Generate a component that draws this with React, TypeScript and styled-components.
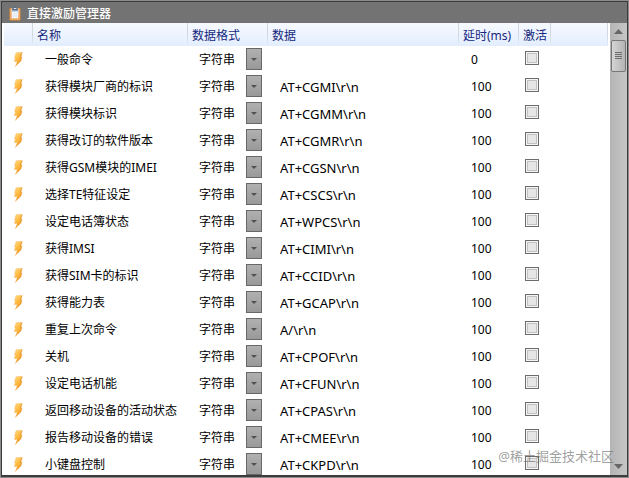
import React from "react";
import styled, { createGlobalStyle } from "styled-components";

const GlobalStyle = createGlobalStyle`
  *, *::before, *::after { box-sizing: border-box; }
  body { margin: 0; background: #8c8c8c; }
  body, button, select, input {
    font-family: "Noto Sans", "Noto Sans CJK SC", sans-serif;
    font-size: 12px;
  }
`;

const Frame = styled.div`
  height: 100vh;
  padding: 1px;
  background: #8c8c8c;
`;

const Window = styled.main`
  display: flex;
  flex-direction: column;
  height: 100%;
  border: 1px solid #3c3c3c;
  border-width: 1px 1px 2px;
  background: #fff;
  overflow: hidden;
`;

const TitleBar = styled.header`
  display: flex;
  flex: none;
  align-items: center;
  gap: 6px;
  height: 21px;
  padding: 2px 7px 0;
  background: #737373;
  color: #fff;
`;

const Title = styled.h1`
  margin: 0;
  font-size: 12px;
  line-height: 20px;
  font-weight: 500;
`;

const Body = styled.div`
  display: flex;
  flex: 1;
  min-height: 0;
`;

const ListPane = styled.div`
  flex: 1;
  min-width: 0;
  padding: 0 2px;
  overflow: hidden;
`;

const Table = styled.table`
  width: 100%;
  table-layout: fixed;
  border-collapse: separate;
  border-spacing: 0;
  color: #000;
`;

const Col = styled.col<{ $width?: number }>`
  width: ${(p) => (p.$width ? `${p.$width}px` : "auto")};
`;

const HeadRow = styled.tr`
  background: linear-gradient(#f6f9ff, #edf4ff 50%, #e2edfd);
`;

const HeadCell = styled.th`
  height: 23px;
  padding: 2px 0 0 4px;
  border-right: 1px solid;
  border-image: linear-gradient(#cfd4dc, #d4dae4 60%, #e8f0fc) 1;
  color: #15287d;
  font-weight: 400;
  line-height: 20px;
  text-align: left;
  white-space: nowrap;
`;

const Cell = styled.td<{ $indent: number }>`
  height: 27px;
  padding: 0 0 0 ${(p) => p.$indent}px;
  line-height: 20px;
  white-space: nowrap;
`;

const DataCell = styled(Cell)`
  font-size: 13px;
`;

const FormatField = styled.span`
  display: grid;
  grid-template-columns: 47px 16px;
  align-items: center;
  margin-bottom: 1px;
`;

const FormatSelect = styled.select`
  grid-area: 1 / 1 / 2 / 3;
  width: 100%;
  height: 22px;
  padding: 1px 0 0;
  border: 0;
  background: transparent;
  color: #000;
  appearance: none;
`;

const DropMark = styled.span`
  display: flex;
  grid-area: 1 / 2;
  align-items: center;
  justify-content: center;
  height: 22px;
  border: 1px solid #686868;
  background: linear-gradient(#b0b0b0, #999);
  pointer-events: none;
`;

const Check = styled.input`
  display: block;
  width: 14px;
  height: 14px;
  margin: 0 0 4px;
  border: 1px solid #6c6c6c;
  background: #e6e6e6;
  box-shadow: inset 0 0 0 1px #f4f4f4, inset 0 0 0 2px #c2c2c2;
  appearance: none;

  &:checked { background: #777; }
`;

const ScrollBar = styled.div`
  display: flex;
  flex: none;
  flex-direction: column;
  width: 17px;
  padding: 0 1px;
  background: linear-gradient(90deg, #b4b4b4, #c6c6c6);
`;

const ScrollButton = styled.button`
  display: flex;
  align-items: center;
  justify-content: center;
  height: 17px;
  padding: 0;
  border: 0;
  background: transparent;
`;

const Thumb = styled.div`
  display: flex;
  align-items: center;
  justify-content: center;
  height: 32px;
  border: 1px solid #777;
  border-radius: 2px;
  background: linear-gradient(90deg, #d4d4d4, #b4b4b4);
`;

const Track = styled.div`
  flex: 1;
`;

const Watermark = styled.div`
  position: absolute;
  right: 15px;
  bottom: 12px;
  color: rgba(105, 105, 105, 0.65);
  font-size: 13px;
  line-height: 20px;
  pointer-events: none;
`;

const Icon = styled.svg`
  display: block;
  flex: none;
`;

function ClipboardIcon() {
  return (
    <Icon width="12" height="14" viewBox="0 0 12 14" aria-hidden="true">
      <rect x="0.5" y="1" width="11" height="12.5" rx="1" fill="#e08a35" />
      <path d="M1.5 2v10.500h9V2" fill="none" stroke="#f3ad5f" strokeWidth="0.8" />
      <path d="M2.500 1.500h7v10h-7z" fill="#f3f7fc" />
      <path d="M2.500 3.500h7v1.500h-7z" fill="#c3d3e6" />
      <path d="M3.500 7h5M3.500 9h5" stroke="#d5dfeb" strokeWidth="0.8" />
      <path d="M3 1.500h1.500V0h3v1.500H9v2H3z" fill="#4f6d90" />
      <path d="M5 1h2v1H5z" fill="#dbe6f2" />
    </Icon>
  );
}

function BoltIcon() {
  return (
    <Icon width="10" height="15" viewBox="0 0 10 15" aria-hidden="true">
      <defs>
        <linearGradient id="bolt" x1="0" y1="0" x2="0.5" y2="1">
          <stop offset="0" stopColor="#ffdc8c" />
          <stop offset="0.45" stopColor="#ffc04a" />
          <stop offset="1" stopColor="#f79a1c" />
        </linearGradient>
      </defs>
      <path
        d="M3 0.700L9.300 0.300L8 4.700L9 4.900L8 9L2.300 14.500L4.300 9.600L1.200 9.400L2.500 6.200L1.500 6Z"
        fill="url(#bolt)"
        stroke="#f3b765"
        strokeWidth="0.4"
        strokeLinejoin="round"
      />
      <path d="M8.800 0.900L7.300 5.100L8.400 5.300L7.500 8.700L4 12.300" fill="none" stroke="#d9892c" strokeWidth="0.6" />
    </Icon>
  );
}

const commands: [string, string, string][] = [
  ["一般命令", "", "0"],
  ["获得模块厂商的标识", "AT+CGMI\\r\\n", "100"],
  ["获得模块标识", "AT+CGMM\\r\\n", "100"],
  ["获得改订的软件版本", "AT+CGMR\\r\\n", "100"],
  ["获得GSM模块的IMEI", "AT+CGSN\\r\\n", "100"],
  ["选择TE特征设定", "AT+CSCS\\r\\n", "100"],
  ["设定电话簿状态", "AT+WPCS\\r\\n", "100"],
  ["获得IMSI", "AT+CIMI\\r\\n", "100"],
  ["获得SIM卡的标识", "AT+CCID\\r\\n", "100"],
  ["获得能力表", "AT+GCAP\\r\\n", "100"],
  ["重复上次命令", "A/\\r\\n", "100"],
  ["关机", "AT+CPOF\\r\\n", "100"],
  ["设定电话机能", "AT+CFUN\\r\\n", "100"],
  ["返回移动设备的活动状态", "AT+CPAS\\r\\n", "100"],
  ["报告移动设备的错误", "AT+CMEE\\r\\n", "100"],
  ["小键盘控制", "AT+CKPD\\r\\n", "100"],
];

export default function App() {
  return (
    <Frame>
      <GlobalStyle />
      <Window>
        <TitleBar>
          <ClipboardIcon />
          <Title>直接激励管理器</Title>
        </TitleBar>
        <Body>
          <ListPane>
            <Table>
              <colgroup>
                <Col $width={29} />
                <Col $width={155} />
                <Col $width={80} />
                <Col />
                <Col $width={60} />
                <Col $width={32} />
                <Col $width={57} />
              </colgroup>
              <thead>
                <HeadRow>
                  <HeadCell />
                  <HeadCell scope="col">名称</HeadCell>
                  <HeadCell scope="col">数据格式</HeadCell>
                  <HeadCell scope="col">数据</HeadCell>
                  <HeadCell scope="col">延时(ms)</HeadCell>
                  <HeadCell scope="col">激活</HeadCell>
                  <HeadCell />
                </HeadRow>
              </thead>
              <tbody>
                {commands.map(([name, data, delay]) => (
                  <tr key={name}>
                    <Cell $indent={9}><BoltIcon /></Cell>
                    <Cell $indent={12}>{name}</Cell>
                    <Cell $indent={11}>
                      <FormatField>
                        <FormatSelect aria-label={`${name} 数据格式`}>
                          <option>字符串</option>
                        </FormatSelect>
                        <DropMark>
                          <Icon width="6" height="3" viewBox="0 0 6 3" aria-hidden="true">
                            <path d="M0 0h6L3 3z" fill="#505050" />
                          </Icon>
                        </DropMark>
                      </FormatField>
                    </Cell>
                    <DataCell $indent={12}>{data}</DataCell>
                    <Cell $indent={12}>{delay}</Cell>
                    <Cell $indent={6}>
                      <Check type="checkbox" aria-label={`${name} 激活`} />
                    </Cell>
                    <Cell $indent={0} />
                  </tr>
                ))}
              </tbody>
            </Table>
          </ListPane>
          <ScrollBar>
            <ScrollButton type="button" aria-label="向上滚动">
              <Icon width="9" height="5" viewBox="0 0 9 5" aria-hidden="true">
                <path d="M0 5L4.500 0L9 5z" fill="#666" />
              </Icon>
            </ScrollButton>
            <Thumb>
              <Icon width="7" height="8" viewBox="0 0 7 8" aria-hidden="true">
                <path d="M0 .5h7M0 2.500h7M0 4.500h7M0 6.500h7" stroke="#6c6c6c" />
              </Icon>
            </Thumb>
            <Track />
            <ScrollButton type="button" aria-label="向下滚动">
              <Icon width="9" height="5" viewBox="0 0 9 5" aria-hidden="true">
                <path d="M0 0h9L4.500 5z" fill="#666" />
              </Icon>
            </ScrollButton>
          </ScrollBar>
        </Body>
      </Window>
      <Watermark>@稀土掘金技术社区</Watermark>
    </Frame>
  );
}
